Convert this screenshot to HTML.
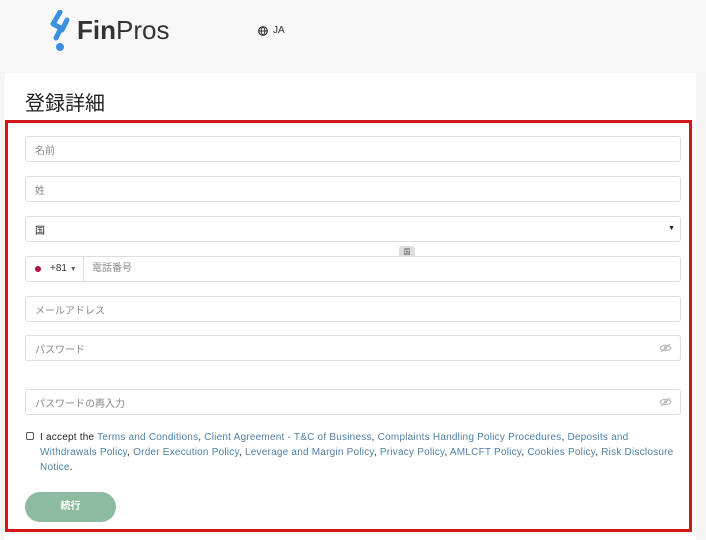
<!DOCTYPE html>
<html><head><meta charset="utf-8"><style>
*{box-sizing:border-box;margin:0;padding:0}
body{width:706px;height:540px;background:#f5f5f5;font-family:"Liberation Sans","Noto Sans CJK JP",sans-serif;position:relative;overflow:hidden}
.hdr{position:absolute;left:0;top:0;width:706px;height:72px;background:#f8f8f8}
.card{position:absolute;left:5px;top:73px;width:691px;height:467px;background:#fff}
.title{position:absolute;left:25px;top:91px;font-size:20px;line-height:26px;color:#222}
.red{position:absolute;left:5px;top:120px;width:687px;height:412px;border:3px solid #d01818}
.in{position:absolute;left:25px;width:656px;height:26px;border:1px solid #ddd;border-radius:3px;background:#fff;font-size:10px;color:#888;padding-left:9px;display:flex;align-items:center}
.eye{position:absolute;right:8px;top:7px}
.terms{position:absolute;left:40px;top:430px;width:650px;font-size:10px;line-height:15px;color:#222;letter-spacing:0.22px}
.terms a{color:#4f7fa6;text-decoration:none}
.cb{position:absolute;left:26px;top:432px;width:8px;height:8px;border:1px solid #555;border-radius:2px}
.btn{position:absolute;left:25px;top:492px;width:91px;height:30px;border-radius:15px;background:#8dbba0;color:#fff;font-size:10px;text-align:center;line-height:30px;font-weight:bold}
</style></head><body>
<div class="hdr">
<svg style="position:absolute;left:50px;top:10px" width="24" height="42" viewBox="0 0 24 42"><path d="M10 2 L3 14 L11 18 L6 28" stroke="#3d8fe0" stroke-width="5" fill="none" stroke-linecap="round" stroke-linejoin="round"/><path d="M17 10 L12 20" stroke="#3d8fe0" stroke-width="5" stroke-linecap="round"/><circle cx="10" cy="37" r="4" fill="#3d8fe0"/></svg>
<div style="position:absolute;left:77px;top:15px;font-size:26px;line-height:30px;color:#333"><b>Fin</b>Pros</div>
<svg style="position:absolute;left:258px;top:26px" width="10" height="10" viewBox="0 0 10 10"><circle cx="5" cy="5" r="4.3" fill="none" stroke="#333" stroke-width="1.2"/><path d="M0.7 5H9.3M5 0.7C2.5 3 2.5 7 5 9.3M5 0.7C7.5 3 7.5 7 5 9.3" stroke="#333" fill="none" stroke-width="1"/></svg>
<div style="position:absolute;left:273px;top:25px;font-size:10px;color:#333">JA</div>
</div>
<div class="card"></div>
<div class="title">登録詳細</div>
<div class="red"></div>
<div class="in" style="top:136px">名前</div>
<div class="in" style="top:176px">姓</div>
<div class="in" style="top:216px;color:#222">国<span style="position:absolute;right:5px;top:8px;font-size:7px">▼</span></div>
<div style="position:absolute;left:399px;top:246px;width:16px;height:14px;background:#ddd;border-radius:3px;font-size:7px;text-align:center;line-height:14px;color:#555">国</div>
<div class="in" style="top:256px;padding-left:0"><span style="position:absolute;left:0;top:0;width:58px;height:24px;border-right:1px solid #ddd"><span style="position:absolute;left:9px;top:9px;width:6px;height:6px;border-radius:3px;background:#b01040"></span><span style="position:absolute;left:24px;top:6px;color:#333;line-height:12px">+81 <span style="font-size:7px;color:#666">▼</span></span></span><span style="position:absolute;left:66px;top:6px;line-height:12px">電話番号</span></div>
<div class="in" style="top:296px">メールアドレス</div>
<div class="in" style="top:335px">パスワード<svg class="eye" width="13" height="10" viewBox="0 0 13 10"><path d="M1 5C3 1.5 10 1.5 12 5C10 8.5 3 8.5 1 5Z" fill="none" stroke="#bbb" stroke-width="1.2"/><circle cx="6.5" cy="5" r="1.6" fill="#bbb"/><path d="M2 9L11 1" stroke="#bbb" stroke-width="1.2"/></svg></div>
<div class="in" style="top:389px">パスワードの再入力<svg class="eye" width="13" height="10" viewBox="0 0 13 10"><path d="M1 5C3 1.5 10 1.5 12 5C10 8.5 3 8.5 1 5Z" fill="none" stroke="#bbb" stroke-width="1.2"/><circle cx="6.5" cy="5" r="1.6" fill="#bbb"/><path d="M2 9L11 1" stroke="#bbb" stroke-width="1.2"/></svg></div>
<div class="cb"></div>
<div class="terms">I accept the <a>Terms and Conditions</a>, <a>Client Agreement - T&amp;C of Business</a>, <a>Complaints Handling Policy Procedures</a>, <a>Deposits and</a><br><a>Withdrawals Policy</a>, <a>Order Execution Policy</a>, <a>Leverage and Margin Policy</a>, <a>Privacy Policy</a>, <a>AMLCFT Policy</a>, <a>Cookies Policy</a>, <a>Risk Disclosure</a><br><a>Notice</a>.</div>
<div class="btn">続行</div>
</body></html>
